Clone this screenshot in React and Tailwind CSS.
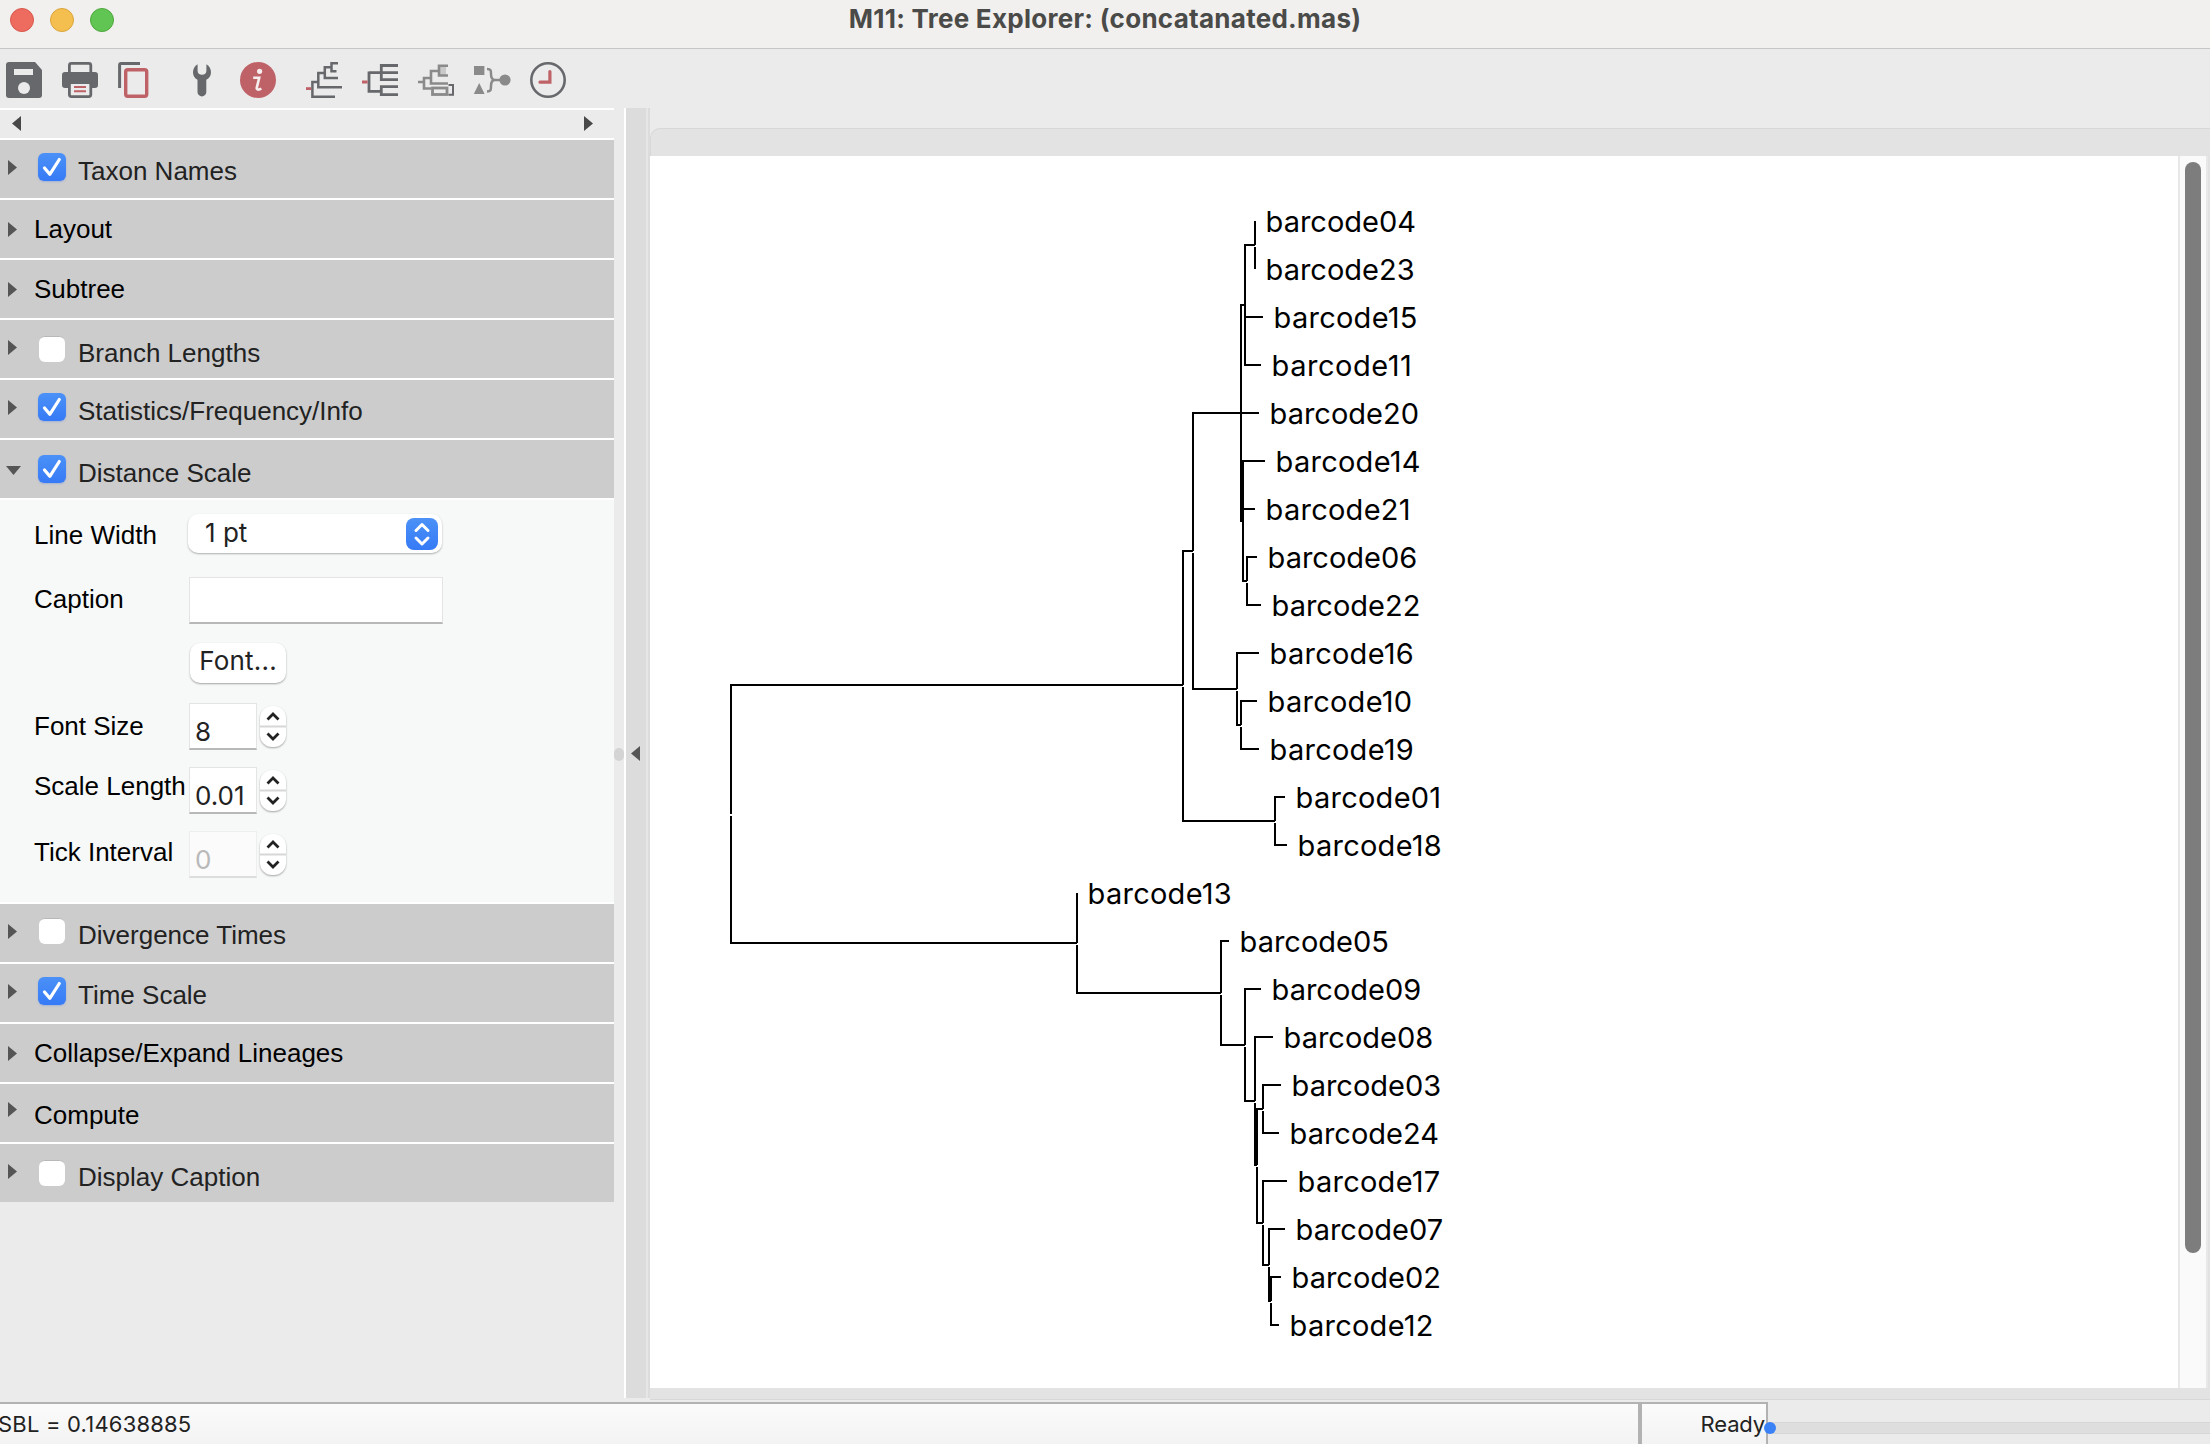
import React from "react";

const INK = "#66686b";
const RED = "#be6267";
const SOFT = "#8a8a8a";

function ToolIcon({ x, className = "", children }) {
  return (
    <svg viewBox={`${x} 62 36 36`} className={`h-9 w-9 shrink-0 overflow-visible ${className}`} fill="none" strokeWidth="2.8">
      {children}
    </svg>
  );
}

function Toolbar() {
  return (
    <div className="flex h-[59px] shrink-0 items-start gap-5 bg-[#ebebeb] pt-[13px] pl-[6px]">
      <ToolIcon x={6}>
        <path d="M9 62H35L42 70V95a3 3 0 0 1-3 3H9a3 3 0 0 1-3-3V65a3 3 0 0 1 3-3Z" fill={INK} />
        <rect x="14" y="69" width="19" height="6" fill="#ebebeb" />
        <circle cx="24" cy="88" r="6" fill="#ebebeb" />
      </ToolIcon>
      <ToolIcon x={62}>
        <rect x="69.4" y="63.4" width="21.4" height="14" rx="2" stroke={INK} />
        <rect x="62" y="72" width="36" height="16" rx="3" fill={INK} />
        <rect x="69.4" y="82.6" width="21.4" height="14" rx="2" fill="#ebebeb" stroke={INK} />
        <path d="M74 87H86M74 91.2H86" stroke={RED} strokeWidth="2" />
      </ToolIcon>
      <ToolIcon x={118}>
        <path d="M119.6 88V65a1.5 1.5 0 0 1 1.5-1.5H140" stroke={INK} strokeWidth="3" />
        <rect x="125.7" y="69.7" width="21" height="26.6" rx="2" stroke={RED} strokeWidth="3.4" />
      </ToolIcon>
      <ToolIcon x={184} className="ml-[10px]">
        <path
          d="M197.6 64.2C194.5 66 193 69 193 72.2c0 3.4 1.700 6.200 4.500 7.600V92a4.400 4.400 0 0 0 8.800 0V79.800C209.300 78.400 211 75.600 211 72.200c0-3.200-1.500-6.200-4.600-8v6.600c0 2.400-1.700 4-4.400 4s-4.400-1.600-4.400-4Z"
          fill={INK}
        />
      </ToolIcon>
      <ToolIcon x={240}>
        <circle cx="258" cy="80" r="18" fill={RED} />
        <circle cx="259.600" cy="71.300" r="2.600" fill="#f6eeee" />
        <path d="M253.200 77.800H259.200L256.800 87.600c-.5 2.300 1.700 2.600 4.600 1.100" stroke="#f6eeee" strokeWidth="2.600" />
      </ToolIcon>
      <ToolIcon x={306} className="ml-[10px]">
        <path d="M338 63.300H331.500V71.200H336.500M331.500 67.300H324.800V78H338M324.800 73H318.300V87.200H342M318.300 82H312.400V96.700H335" stroke={INK} strokeWidth="2.500" />
        <path d="M306 88.600H311.200" stroke={RED} strokeWidth="2.800" />
      </ToolIcon>
      <ToolIcon x={362}>
        <path d="M398 65.500H381.300V79.700H398M369 72.700H398M398 86.700H381.300V94.600H398M369 71.400V92.800M369 91.400H381" stroke={INK} strokeWidth="2.800" />
        <path d="M362 82H367.600" stroke={RED} strokeWidth="3" />
      </ToolIcon>
      <ToolIcon x={418}>
        <path d="M448 65.800H439V75.500H448M438 71H431V78M430 78H424V88.500H431M431 78V83.500H448M418 82H424" stroke={SOFT} strokeWidth="2.600" />
        <path d="M439 66H446V75H439Z" fill={SOFT} fillOpacity="0.35" />
        <rect x="432.500" y="88" width="14.500" height="6.500" stroke={SOFT} strokeWidth="2.800" />
        <path d="M448.500 85H453V94.800H448.500" stroke={INK} strokeWidth="2" />
      </ToolIcon>
      <ToolIcon x={474}>
        <rect x="474" y="66" width="10.400" height="9" fill={SOFT} />
        <path d="M479.200 83L484.600 94H473.800Z" fill={SOFT} />
        <path d="M487 69c4 0 4 1.500 4 5s1 6 4 6c-3 0-4 2.500-4 6s0 5.500-4 5.500M495 80H501" stroke={SOFT} strokeWidth="2.500" />
        <circle cx="505" cy="80" r="5.600" fill={SOFT} />
      </ToolIcon>
      <ToolIcon x={530}>
        <circle cx="548" cy="80" r="16.700" stroke={INK} strokeWidth="2.600" />
        <path d="M549.900 71.500V82.200H540" stroke={RED} strokeWidth="3.200" strokeLinecap="round" />
      </ToolIcon>
    </div>
  );
}

function TitleBar() {
  return (
    <div className="grid h-[49px] shrink-0 grid-cols-[1fr_auto_1fr] items-start border-b border-[#c6c6c6] bg-[#f1f0ee]">
      <div className="flex gap-4 pt-2 pl-[10px]">
        <span className="h-6 w-6 rounded-full border border-[#d8574c] bg-[#ed6b5f]" />
        <span className="h-6 w-6 rounded-full border border-[#d9a53c] bg-[#f5bf4f]" />
        <span className="h-6 w-6 rounded-full border border-[#4ea73d] bg-[#61c554]" />
      </div>
      <h1 className="mt-[3px] font-[Inter,sans-serif] text-[26px] leading-8 font-bold tracking-[0.27px] whitespace-nowrap text-[#4a4a48]">
        M11: Tree Explorer: (concatanated.mas)
      </h1>
    </div>
  );
}

function Check({ on }) {
  if (!on) {
    return <span className="mx-[1px] mt-[2px] block h-[26px] w-[26px] rounded-[6px] border-t border-[#b8b8b8] bg-white" />;
  }
  return (
    <span className="block h-7 w-7 rounded-[6px] bg-linear-to-b from-[#4b91f7] to-[#367af6] shadow-[0_1px_2px_rgba(0,80,255,0.2)]">
      <svg viewBox="0 0 28 28" className="h-7 w-7" fill="none" stroke="#fff" strokeWidth="3.200" strokeLinecap="round" strokeLinejoin="round">
        <path d="M6.500 15L11.800 21.300L21.300 6.500" />
      </svg>
    </span>
  );
}

/* text, box and tri: top offsets of the label, checkbox and disclosure triangle */
const TOP = [
  { label: "Taxon Names", on: true, text: "mt-4", box: "mt-[13px]", tri: "mt-5" },
  { label: "Layout", text: "mt-[14px]", tri: "mt-[22px]" },
  { label: "Subtree", text: "mt-[14px]", tri: "mt-[22px]" },
  { label: "Branch Lengths", on: false, text: "mt-[18px]", box: "mt-[14px]", tri: "mt-5" },
  { label: "Statistics/Frequency/Info", on: true, text: "mt-4", box: "mt-[13px]", tri: "mt-5" },
  { label: "Distance Scale", on: true, open: true, text: "mt-[18px]", box: "mt-[15px]", tri: "mt-[26px]" },
];
const BOTTOM = [
  { label: "Divergence Times", on: false, text: "mt-4", box: "mt-[12px]", tri: "mt-5" },
  { label: "Time Scale", on: true, text: "mt-4", box: "mt-[13px]", tri: "mt-5" },
  { label: "Collapse/Expand Lineages", text: "mt-[14px]", tri: "mt-[22px]" },
  { label: "Compute", text: "mt-4", tri: "mt-[18px]" },
  { label: "Display Caption", on: false, text: "mt-[18px]", box: "mt-[14px]", tri: "mt-5" },
];

function Header({ item }) {
  const hasBox = item.on !== undefined;
  return (
    <div className="flex h-[60px] items-start border-t-2 border-white bg-[#cccccc]">
      <div className={`w-[34px] ${item.tri}`}>
        {item.open ? (
          <svg viewBox="0 0 15 9" className="ml-[6px] h-[9px] w-[15px]"><path d="M0 0H15L7.500 9Z" fill="#555" /></svg>
        ) : (
          <svg viewBox="0 0 9 15" className="ml-[8px] h-[15px] w-[9px]"><path d="M0 0L9 7.500L0 15Z" fill="#555" /></svg>
        )}
      </div>
      {hasBox && <div className={`ml-1 w-10 ${item.box}`}><Check on={item.on} /></div>}
      <span className={`leading-[30px] whitespace-nowrap ${item.text} ${hasBox ? "text-[#222]" : "text-black"}`}>{item.label}</span>
    </div>
  );
}

function Label({ children, className }) {
  return <span className={`w-[155px] shrink-0 whitespace-nowrap leading-[30px] text-black ${className}`}>{children}</span>;
}

function Spinner({ value, disabled }) {
  return (
    <>
      <div
        className={`h-[47px] w-[68px] border border-b-2 pl-[5px] pt-[13px] font-[Inter,sans-serif] leading-[30px] ${
          disabled ? "border-[#eeeeee] border-b-[#dddddd] bg-[#fbfbfb] text-[#b9b9b9]" : "border-[#e4e4e4] border-b-[#b8b8b8] bg-white text-[#222]"
        }`}
      >
        {value}
      </div>
      <div className="mt-[3px] ml-[3px] h-[41px] w-[26px] rounded-[12px] bg-white shadow-[0_1px_2px_rgba(0,0,0,0.35)]">
        <svg viewBox="0 0 26 41" className="h-[41px] w-[26px]" fill="none">
          <path d="M0 20.500H26" stroke="#d6d6d6" strokeWidth="2" />
          <path d="M7.500 13.500L13 8L18.500 13.500M7.500 27.500L13 33L18.500 27.500" stroke="#222" strokeWidth="2.800" />
        </svg>
      </div>
    </>
  );
}

function ScalePanel() {
  return (
    <div className="flex h-[404px] flex-col border-t-2 border-white bg-[#f7f9f8] pl-[34px]">
      <div className="flex h-16 items-start">
        <Label className="mt-5">Line Width</Label>
        <div className="mt-[14px] -ml-px flex h-[39px] w-[254px] items-center justify-between rounded-[10px] bg-white pr-1 pl-[17px] font-[Inter,sans-serif] text-[#222] shadow-[0_1px_2px_rgba(0,0,0,0.3)]">
          <span className="-mt-[2px] leading-[30px]">1 pt</span>
          <svg viewBox="0 0 32 32" className="h-8 w-8 rounded-[8px] bg-linear-to-b from-[#4b91f7] to-[#367af6]" fill="none" stroke="#fff" strokeWidth="3" strokeLinecap="round" strokeLinejoin="round">
            <path d="M10 12.500L16 6.500L22 12.500M10 20L16 26L22 20" />
          </svg>
        </div>
      </div>
      <div className="flex h-[70px] items-start">
        <Label className="mt-5">Caption</Label>
        <div className="mt-[13px] h-[47px] w-[254px] border border-[#e4e4e4] border-b-2 border-b-[#b8b8b8] bg-white" />
      </div>
      <div className="flex h-[60px] items-start pl-[156px]">
        <button className="mt-[9px] h-10 w-24 rounded-[10px] bg-white pb-[4px] text-center font-[Inter,sans-serif] leading-[30px] tracking-[0.2px] text-[#222] shadow-[0_1px_2px_rgba(0,0,0,0.35)]">Font...</button>
      </div>
      <div className="flex h-16 items-start pt-[9px]">
        <Label className="mt-2">Font Size</Label>
        <Spinner value="8" />
      </div>
      <div className="flex h-16 items-start pt-[9px]">
        <Label className="mt-1">Scale Length</Label>
        <Spinner value="0.01" />
      </div>
      <div className="flex h-16 items-start pt-[9px]">
        <Label className="mt-[6px]">Tick Interval</Label>
        <Spinner value="0" disabled />
      </div>
    </div>
  );
}

function Sidebar() {
  return (
    <aside className="w-[614px] shrink-0 font-['Liberation_Sans',sans-serif] text-[26px]">
      <div className="flex h-[30px] items-start justify-between border-t-2 border-white pt-[6px] pr-[21px] pl-[12px]">
        <svg viewBox="0 0 9 15" className="h-[15px] w-[9px]"><path d="M9 0L0 7.500L9 15Z" fill="#484848" /></svg>
        <svg viewBox="0 0 9 15" className="h-[15px] w-[9px]"><path d="M0 0L9 7.500L0 15Z" fill="#484848" /></svg>
      </div>
      {TOP.map((item) => <Header key={item.label} item={item} />)}
      <ScalePanel />
      {BOTTOM.map((item) => <Header key={item.label} item={item} />)}
    </aside>
  );
}

/* [name, x of the branch tip]; rows are 48px apart */
const LEAVES = [
  ["04", 1255], ["23", 1255], ["15", 1263], ["11", 1261], ["20", 1259], ["14", 1265],
  ["21", 1255], ["06", 1257], ["22", 1261], ["16", 1259], ["10", 1257], ["19", 1259],
  ["01", 1285], ["18", 1287], ["13", 1077], ["05", 1229], ["09", 1261], ["08", 1273],
  ["03", 1281], ["24", 1279], ["17", 1287], ["07", 1285], ["02", 1281], ["12", 1279],
];

const BRANCHES = [
  "M731 814V685H1183M731 816V943H1077",
  "M1183 685V551H1193M1183 687V821H1275",
  "M1193 551V413H1259M1193 553V689H1237",
  "M1241 522V305H1245M1241 521H1243",
  "M1255 245V221M1255 247V269",
  "M1255 245H1245V365H1261M1245 317H1263",
  "M1265 461H1243V581H1247M1243 509H1255",
  "M1257 557H1247V581M1247 583V605H1261",
  "M1259 653H1237V689M1237 691V725H1241",
  "M1257 701H1241V725M1241 727V749H1259",
  "M1285 797H1275V821M1275 823V845H1287",
  "M1077 943V893M1077 945V993H1221",
  "M1229 941H1221V993M1221 995V1045H1245",
  "M1261 989H1245V1045M1245 1047V1101H1255",
  "M1273 1037H1255V1101M1255 1103V1165H1257",
  "M1263 1109H1257V1165M1257 1167V1223H1263",
  "M1281 1085H1263V1109M1263 1111V1133H1279",
  "M1287 1181H1263V1223M1263 1225V1265H1269",
  "M1285 1229H1269V1265M1269 1267V1301H1271",
  "M1281 1277H1271V1301M1271 1303V1325H1279",
];

function Tree() {
  return (
    <svg viewBox="650 156 1528 1232" className="block h-[1232px] w-[1528px] shrink-0 bg-white">
      <path d={BRANCHES.join("")} fill="none" stroke="#000" strokeWidth="2" shapeRendering="crispEdges" />
      {LEAVES.map(([id, x], i) => (
        <text key={id} x={x + 10.600} y={231.500 + i * 48} fontFamily="Inter, sans-serif" fontSize="29" letterSpacing={(id.split("1").length - 1) * 0.260} fill="#000">
          {`barcode${id}`}
        </text>
      ))}
    </svg>
  );
}

function Canvas() {
  return (
    <main className="flex min-w-0 flex-1 flex-col pt-5">
      <div className="h-7 shrink-0 rounded-tl-[10px] border-t border-l border-[#d8d8d8] bg-[#e3e3e3]" />
      <div className="flex h-[1232px] shrink-0">
        <Tree />
        <div className="flex w-[30px] justify-center border-x-2 border-[#e8e8e8] bg-[#fafafa] pt-[6px]">
          <div className="h-[1091px] w-4 rounded-full bg-[#7d7d7d]" />
        </div>
        <div className="flex-1 bg-[#e2e2e2]" />
      </div>
      <div className="h-3 shrink-0 border-b border-[#d8d8d8] bg-[#e3e3e3]" />
    </main>
  );
}

function StatusBar() {
  return (
    <footer className="flex h-[42px] shrink-0 font-[Inter,sans-serif] text-[22px] leading-7 whitespace-nowrap text-[#222]">
      <div className="w-[1642px] border-t-2 border-r-4 border-[#b2b2b2] bg-linear-to-b from-[#fbfbfb] to-[#f3f3f3] pt-[6px]">
        <span className="-ml-[2px] tracking-[0.2px]">SBL = 0.14638885</span>
      </div>
      <div className="w-[126px] border-t-2 border-r-2 border-[#b2b2b2] bg-linear-to-b from-[#fbfbfb] to-[#f3f3f3] pt-[6px] text-right">
        <span className="mr-px tracking-[-0.15px]">Ready</span>
      </div>
      <div className="relative mt-5 h-3 flex-1 border-y border-[#d6d6d6] bg-[#dedede]">
        <span className="absolute -top-px -left-1 h-3 w-3 rounded-full bg-[#3b82f7]" />
      </div>
    </footer>
  );
}

export default function App() {
  return (
    <div className="flex h-[1444px] w-[2210px] flex-col overflow-hidden bg-[#ebebeb]">
      <TitleBar />
      <Toolbar />
      <div className="flex h-[1294px] shrink-0">
        <Sidebar />
        <div className="flex w-[10px] items-center">
          <span className="mt-[-1px] h-[13px] w-[10px] rounded-full bg-[#d4d4d4]" />
        </div>
        <div className="mb-1 flex w-[22px] shrink-0 items-start border-l-2 border-white bg-[#dcdcdc] pt-[638px] pl-[5px]">
          <svg viewBox="0 0 9 15" className="h-[15px] w-[9px]"><path d="M9 0L0 7.500L9 15Z" fill="#555" /></svg>
        </div>
        <div className="mb-1 w-1 shrink-0 border-x-2 border-l-[#e6e6e6] border-r-[#dcdcdc]" />
        <Canvas />
      </div>
      <StatusBar />
    </div>
  );
}
